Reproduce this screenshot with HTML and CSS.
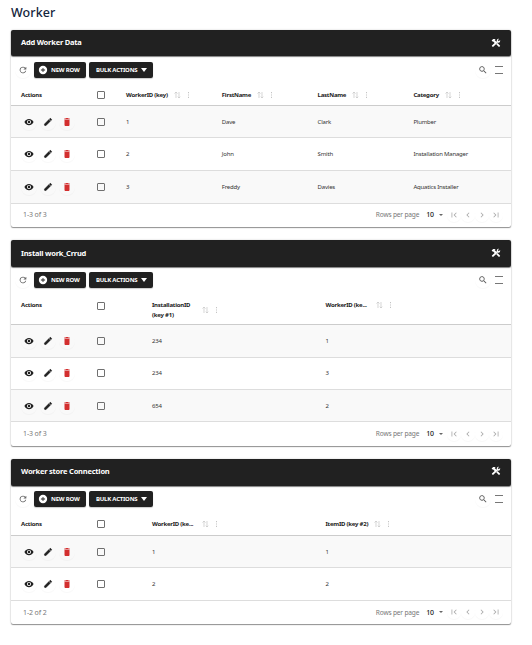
FILE: index.html
```html
<!DOCTYPE html>
<html lang="en">
<head>
<meta charset="utf-8">
<title>Worker</title>
<link rel="stylesheet" href="styles.css">
</head>
<body>
<svg class="defs" aria-hidden="true">
<symbol id="eye" viewBox="0 0 24 24"><path d="M12 4.500C7 4.500 2.730 7.610 1 12c1.730 4.390 6 7.500 11 7.500s9.270-3.110 11-7.500c-1.730-4.390-6-7.500-11-7.500zM12 17c-2.760 0-5-2.240-5-5s2.240-5 5-5 5 2.240 5 5-2.240 5-5 5zm0-8c-1.660 0-3 1.340-3 3s1.340 3 3 3 3-1.340 3-3-1.340-3-3-3z"/></symbol>
<symbol id="pen" viewBox="0 0 24 24"><path d="M3 17.250V21h3.750L17.810 9.940l-3.750-3.750L3 17.250zM20.710 7.040a1 1 0 0 0 0-1.410l-2.340-2.340a1 1 0 0 0-1.410 0l-1.830 1.830 3.750 3.750 1.830-1.830z" stroke="currentColor"/></symbol>
<symbol id="bin" viewBox="0 0 24 24"><path d="M6 19c0 1.400.9 2.300 2 2.300h8c1.100 0 2-.9 2-2.300V7H6v12zM18.500 3.500h-3l-1-1h-5l-1 1h-3V6h13V3.500z"/></symbol>
<symbol id="reload" viewBox="0 0 24 24"><path d="M17.650 6.350A8 8 0 1 0 19.730 14h-2.080A6 6 0 1 1 12 6c1.660 0 3.140.69 4.220 1.780L13 11h7V4l-2.350 2.350z"/></symbol>
<symbol id="plus" viewBox="0 0 24 24"><path d="M12 2a10 10 0 1 0 0 20 10 10 0 0 0 0-20zm5 11h-4v4h-2v-4H7v-2h4V7h2v4h4v2z"/></symbol>
<symbol id="search" viewBox="0 0 24 24"><path d="M15.500 14h-.79l-.28-.27A6.500 6.500 0 1 0 13.730 14.430l.27.28v.79l5 4.990L20.490 19l-4.990-5zm-6 0a4.500 4.500 0 1 1 0-9 4.500 4.500 0 0 1 0 9z"/></symbol>
<symbol id="tools" viewBox="0 0 24 24"><path d="M21.500 18.200 15.500 12.200 12.500 15.200 18.500 21.200a1 1 0 0 0 1.400 0l1.600-1.600a1 1 0 0 0 0-1.400z"/><path d="M14 8.500C13.500 5.500 14 3.500 16 2.500c1-.6 2-.7 3-.4l-2.800 3 2.700 2.700 2.900-2.900c.7 2.300-.1 4.400-1.700 5.600-1.200.8-2.600.9-3.800.5L5.500 21.200a1 1 0 0 1-1.400 0l-1.800-1.700a1 1 0 0 1 0-1.300L8.700 11.800 5.200 8.300H3.500L1.500 6 5.300 2.200h6L8.800 4.700l3.600 3.600z"/></symbol>
<symbol id="sort" viewBox="0 0 7 8"><path d="M2 7V1M.5 2.500 2 1l1.500 1.500M5 1v6M3.700 5.700 5 7l1.300-1.300" fill="none" stroke="currentColor" stroke-width=".7"/></symbol>
<symbol id="dots" viewBox="0 0 7 8"><path d="M3 1h1v1.200H3zM3 3.400h1v1.200H3zM3 5.800h1V7H3z"/></symbol>
<symbol id="prev" viewBox="0 0 24 24"><path d="M15.410 7.410 14 6l-6 6 6 6 1.410-1.410L10.830 12z"/></symbol>
<symbol id="next" viewBox="0 0 24 24"><path d="M10 6 8.590 7.410 13.170 12l-4.580 4.590L10 18l6-6z"/></symbol>
<symbol id="first" viewBox="0 0 24 24"><path d="M18.410 16.590 13.820 12l4.590-4.590L17 6l-6 6 6 6zM6 6h2v12H6z"/></symbol>
<symbol id="last" viewBox="0 0 24 24"><path d="M5.590 7.410 10.180 12l-4.590 4.590L7 18l6-6-6-6zM16 6h2v12h-2z"/></symbol>
</svg>

<h1>Worker</h1>

<section class="card four">
  <header class="bar"><h2>Add Worker Data</h2><svg><use href="#tools"/></svg></header>
  <div class="tools"><svg class="reload"><use href="#reload"/></svg><button class="new"><svg><use href="#plus"/></svg>NEW ROW</button><button class="bulk">BULK ACTIONS<i></i></button><svg class="search"><use href="#search"/></svg><span class="lines"></span></div>
  <div class="row head"><b>Actions</b><i class="box"></i>
    <div class="th"><b>WorkerID (key)</b><svg><use href="#sort"/></svg><svg><use href="#dots"/></svg></div>
    <div class="th"><b>FirstName</b><svg><use href="#sort"/></svg><svg><use href="#dots"/></svg></div>
    <div class="th"><b>LastName</b><svg><use href="#sort"/></svg><svg><use href="#dots"/></svg></div>
    <div class="th"><b>Category</b><svg><use href="#sort"/></svg><svg><use href="#dots"/></svg></div>
  </div>
  <div class="row"><div class="acts"><svg><use href="#eye"/></svg><svg><use href="#pen"/></svg><svg><use href="#bin"/></svg></div><i class="box"></i><span>1</span><span>Dave</span><span>Clark</span><span>Plumber</span></div>
  <div class="row"><div class="acts"><svg><use href="#eye"/></svg><svg><use href="#pen"/></svg><svg><use href="#bin"/></svg></div><i class="box"></i><span>2</span><span>John</span><span>Smith</span><span>Installation Manager</span></div>
  <div class="row"><div class="acts"><svg><use href="#eye"/></svg><svg><use href="#pen"/></svg><svg><use href="#bin"/></svg></div><i class="box"></i><span>3</span><span>Freddy</span><span>Davies</span><span>Aquatics Installer</span></div>
  <footer><span class="count">1-3 of 3</span><span class="per">Rows per page</span><em>10</em><i></i><nav><svg><use href="#first"/></svg><svg><use href="#prev"/></svg><svg><use href="#next"/></svg><svg><use href="#last"/></svg></nav></footer>
</section>

<section class="card two">
  <header class="bar"><h2>Install work_Crrud</h2><svg><use href="#tools"/></svg></header>
  <div class="tools"><svg class="reload"><use href="#reload"/></svg><button class="new"><svg><use href="#plus"/></svg>NEW ROW</button><button class="bulk">BULK ACTIONS<i></i></button><svg class="search"><use href="#search"/></svg><span class="lines"></span></div>
  <div class="row head tall"><b>Actions</b><i class="box"></i>
    <div class="th wide wrap"><b>InstallationID (key #1)</b><svg><use href="#sort"/></svg><svg><use href="#dots"/></svg></div>
    <div class="th wide"><b>WorkerID (ke...</b><svg><use href="#sort"/></svg><svg><use href="#dots"/></svg></div>
  </div>
  <div class="row"><div class="acts"><svg><use href="#eye"/></svg><svg><use href="#pen"/></svg><svg><use href="#bin"/></svg></div><i class="box"></i><span>234</span><span>1</span></div>
  <div class="row"><div class="acts"><svg><use href="#eye"/></svg><svg><use href="#pen"/></svg><svg><use href="#bin"/></svg></div><i class="box"></i><span>234</span><span>3</span></div>
  <div class="row"><div class="acts"><svg><use href="#eye"/></svg><svg><use href="#pen"/></svg><svg><use href="#bin"/></svg></div><i class="box"></i><span>654</span><span>2</span></div>
  <footer><span class="count">1-3 of 3</span><span class="per">Rows per page</span><em>10</em><i></i><nav><svg><use href="#first"/></svg><svg><use href="#prev"/></svg><svg><use href="#next"/></svg><svg><use href="#last"/></svg></nav></footer>
</section>

<section class="card two">
  <header class="bar"><h2>Worker store Connection</h2><svg><use href="#tools"/></svg></header>
  <div class="tools"><svg class="reload"><use href="#reload"/></svg><button class="new"><svg><use href="#plus"/></svg>NEW ROW</button><button class="bulk">BULK ACTIONS<i></i></button><svg class="search"><use href="#search"/></svg><span class="lines"></span></div>
  <div class="row head"><b>Actions</b><i class="box"></i>
    <div class="th wide"><b>WorkerID (ke...</b><svg><use href="#sort"/></svg><svg><use href="#dots"/></svg></div>
    <div class="th"><b>ItemID (key #2)</b><svg><use href="#sort"/></svg><svg><use href="#dots"/></svg></div>
  </div>
  <div class="row"><div class="acts"><svg><use href="#eye"/></svg><svg><use href="#pen"/></svg><svg><use href="#bin"/></svg></div><i class="box"></i><span>1</span><span>1</span></div>
  <div class="row"><div class="acts"><svg><use href="#eye"/></svg><svg><use href="#pen"/></svg><svg><use href="#bin"/></svg></div><i class="box"></i><span>2</span><span>2</span></div>
  <footer><span class="count">1-2 of 2</span><span class="per">Rows per page</span><em>10</em><i></i><nav><svg><use href="#first"/></svg><svg><use href="#prev"/></svg><svg><use href="#next"/></svg><svg><use href="#last"/></svg></nav></footer>
</section>
</body>
</html>
```
FILE: styles.css
```css
* { box-sizing: border-box; }
body { margin: 0; padding: 4px 21px 0 11px; background: #fff; color: #212121; font-family: "Noto Sans", sans-serif; font-size: 6px; }
svg { fill: currentColor; flex: none; }
.defs { display: none; }
h1 { margin: 0 0 9px; height: 17px; line-height: 17px; font-size: 12.5px; font-weight: 500; letter-spacing: .1px; color: #14253c; }
.card { margin-bottom: 13px; border-radius: 2px; box-shadow: 0 1px 1px rgba(0,0,0,.4), 0 0 2px rgba(0,0,0,.22); }
.bar { display: flex; align-items: center; justify-content: space-between; height: 26px; padding: 0 10px; border-radius: 2px; background: #212121; color: #fff; box-shadow: 0 1px 1px rgba(0,0,0,.5); }
.four h2 { padding-bottom: 2px; }
.two .bar { height: 27px; padding-bottom: 2px; }
h2 { margin: 0; font-size: 7.5px; font-weight: 700; line-height: 12px; letter-spacing: -.22px; }
.bar svg { width: 10px; height: 10px; }
.tools { display: flex; align-items: center; height: 28px; padding: 0 7px; }
.two .tools { height: 26px; }
.reload, .search, .acts svg { width: 16px; height: 16px; padding: 3px; border-radius: 50%; box-shadow: 0 1px 1px rgba(0,0,0,.03); }
.reload { margin: 0 3px 0 -3px; color: #666; }
button { display: flex; align-items: center; height: 16px; border: 0; border-radius: 2px; background: #212121; color: #fff; font: 700 6px "Noto Sans", sans-serif; letter-spacing: -.22px; white-space: nowrap; box-shadow: 0 1px 1px rgba(0,0,0,.2); }
.new { width: 52px; margin-right: 3px; padding: 0 0 0 4px; }
.new svg { width: 10px; height: 10px; margin-right: 3px; }
.bulk { width: 64px; padding: 0 0 0 7px; }
.bulk i { margin-left: 4px; border: 3px solid transparent; border-top: 4px solid #fff; border-bottom: 0; }
.search { margin-left: auto; color: #555; }
.lines { width: 8px; height: 8px; margin: 0 1px 0 4px; border: solid #777; border-width: 1px 0; }
.row { display: grid; align-items: center; height: 32.4px; border-bottom: 1px solid #ddd; color: #333; letter-spacing: -.2px; }
.four .row { grid-template-columns: 75px 40px repeat(3, 95.8px) 1fr; }
.two .row { grid-template-columns: 75px 66px 173.500px 1fr; }
.row:nth-child(4), .row:nth-child(6) { background: #f9f9f9; }
.four .row:nth-child(5) { height: 32.8px; }
.row.head { height: 22px; border-bottom-color: #ccc; color: #212121; letter-spacing: -.23px; }
.two .row.head { height: 24px; padding-top: 2px; }
.two .row.head.tall { height: 32px; padding-top: 0; align-items: start; }
.row.head.tall > b { padding-top: 7px; }
.row.head > b { padding-left: 10px; }
.row b { line-height: 10px; }
.tall .box { margin-top: 9px; }
.tall .th { padding-top: 7px; }
.box { width: 8px; height: 8px; margin-left: 11px; border: 1px solid #707070; border-radius: 1px; }
.acts { display: flex; gap: 3px; padding-left: 10px; color: #212121; }
.acts svg:last-child { color: #d32f2f; }
.th { display: flex; align-items: center; white-space: nowrap; color: #212121; }
.th svg { width: 7px; height: 8px; margin-left: 6px; color: #c4c4c4; }
.th svg + svg { margin-left: 4px; }
.th.wide b { width: 44px; }
.th.wrap { white-space: normal; }
footer { display: flex; align-items: center; height: 23.6px; padding: 0 8px 1px 12px; font-size: 7px; letter-spacing: -.12px; color: #777; }
.count { margin-right: auto; }
.per { font-size: 6.6px; letter-spacing: -.18px; }
footer em { margin-left: 7px; font-style: normal; font-weight: 500; color: #222; }
footer i { margin-left: 5px; border: 2.500px solid transparent; border-top-color: #666; border-bottom: 0; }
footer nav { display: flex; margin-left: 4px; color: #aaa; }
nav svg { width: 14px; height: 14px; padding: 2px; border-radius: 50%; box-shadow: 0 1px 1px rgba(0,0,0,.03); }
```
